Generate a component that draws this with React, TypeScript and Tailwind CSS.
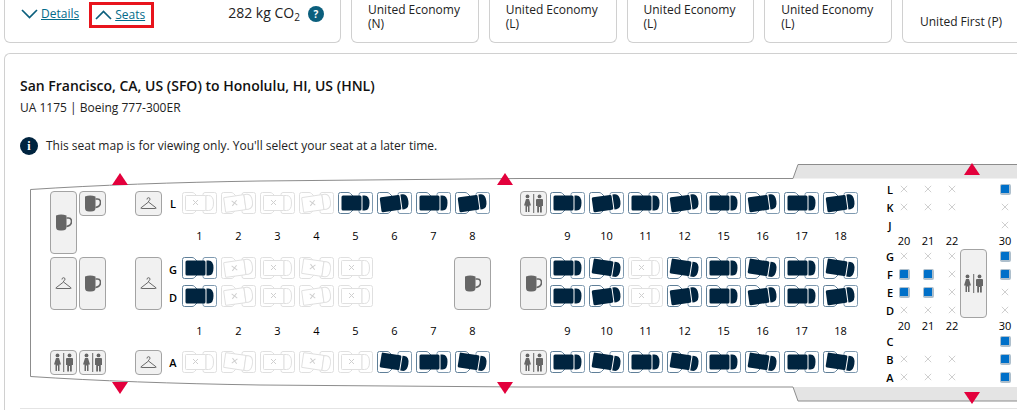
import React from "react";

const NAVY = "#00243f";

function Seat({ on, tilt = 0 }: { on: boolean; tilt?: number }) {
  const line = on ? "#5f7f98" : "#e0e0e0";
  return (
    <svg className="block shrink-0" width="35" height="22" viewBox="0 0 35 22" fill="none">
      <path d="M15 4 L12.5 1.5 Q11.5 .5 10 .5 H2.5 Q.5 .5 .5 2.5 V19.5 Q.5 21.5 2.5 21.5 H10 Q11.5 21.5 12.5 20.5 L15 18" stroke={line} />
      <path d="M21 4 V2.5 Q21 .5 23 .5 H32.5 Q34.5 .5 34.5 2.5 V19.5 Q34.5 21.5 32.5 21.5 H23 Q21 21.5 21 19.5 V18" stroke={on ? "#7f9ab0" : "#e0e0e0"} />
      <g transform={`rotate(${tilt} 17.5 11)`}>
        {on ? (
          <>
            <rect x="3.5" y="3.5" width="20" height="15" rx="1.5" fill={NAVY} />
            <path d="M24.5 3.5 H26.5 Q31.5 3.5 31.5 11 Q31.5 18.5 26.5 18.5 H24.5 Z" fill={NAVY} />
          </>
        ) : (
          <>
            <rect x="3.5" y="3.5" width="20.5" height="15" rx="1" fill="#fff" stroke="#e0e0e0" />
            <path d="M24 3.5 H26.5 Q31.5 3.5 31.5 11 Q31.5 18.5 26.5 18.5 H24 Z" fill="#fff" stroke="#e0e0e0" />
            <path d="M11 8 L16 13 M16 8 L11 13" stroke="#cfcfcf" />
          </>
        )}
      </g>
    </svg>
  );
}

const Cup = () => (
  <svg width="16" height="17" viewBox="0 0 16 17" fill="#666">
    <path d="M0 1.5 Q5 -.5 10.5 1.5 V13 Q10.5 16.5 6 16.5 H4 Q0 16.5 0 13 Z" />
    <path d="M10.5 4 H12.5 Q15.5 4 15.5 7.5 Q15.5 11.5 10.5 12.5" fill="none" stroke="#666" strokeWidth="1.6" />
  </svg>
);

const Hanger = () => (
  <svg width="17" height="13" viewBox="0 0 17 13" fill="none" stroke="#6a6a6a">
    <path d="M7 2.5 Q7 .7 8.5 .7 Q10 .7 10 2.2 Q10 3.4 8.5 4 V5" />
    <path d="M8.5 5 L16 10.8 Q16.5 11.5 15.5 11.5 H1.5 Q.5 11.5 1 10.8 Z" />
  </svg>
);

const Lav = () => (
  <svg width="21" height="19" viewBox="0 0 21 19" fill="#666">
    <circle cx="4.5" cy="2.4" r="1.9" />
    <path d="M3 5 H6 L8 11.5 H6.5 V18 H5 V12.5 H4 V18 H2.5 V11.5 H1 Z" />
    <rect x="10.2" y="0" width="1" height="19" />
    <circle cx="16.5" cy="2.4" r="1.9" />
    <path d="M14 5 H19 Q20 5 20 6 V12 H18.8 V18.5 H17 V13 H16 V18.5 H14.2 V12 H13 V6 Q13 5 14 5 Z" />
  </svg>
);

const facBox = "flex shrink-0 items-center justify-center rounded-[4px] border border-[#a3a3a3] bg-[#f1f1f1]";
const Small = ({ children }: { children: React.ReactNode }) => <div className={`${facBox} h-[25px] w-[27px]`}>{children}</div>;
const Wide = ({ children }: { children: React.ReactNode }) => <div className={`${facBox} h-[53px] w-[27px]`}>{children}</div>;

/* A column of lavatory, galley and closet cards; row gaps follow the cabin's seat rows. */
function FacColumn({ top, mid, bottom }: { top: React.ReactNode; mid: React.ReactNode; bottom: React.ReactNode }) {
  return (
    <div className="flex w-[27px] shrink-0 flex-col">
      <Small>{top}</Small>
      <div className="mt-[41px]">
        <Wide>{mid}</Wide>
      </div>
      <div className="mt-[40px]">
        <Small>{bottom}</Small>
      </div>
    </div>
  );
}

function Tri({ cls, up }: { cls: string; up: boolean }) {
  return (
    <svg className={`absolute ${cls}`} width="16" height="12" viewBox="0 0 16 12" fill="#e3003c">
      <path d={up ? "M8 0 L16 12 H0 Z" : "M0 0 H16 L8 12 Z"} />
    </svg>
  );
}

const T = true;
const F = false;
type State = boolean | null;
const cols1 = ["1", "2", "3", "4", "5", "6", "7", "8"];
const cols2 = ["9", "10", "11", "12", "15", "16", "17", "18"];
/* [L, G, D, A] state and tilt for every column */
const seats1: { on: State[]; tilt: number[] }[] = [
  { on: [F, T, T, F], tilt: [0, 0, 0, 0] },
  { on: [F, F, F, F], tilt: [-8, -8, -8, 8] },
  { on: [F, F, F, F], tilt: [0, 0, 0, 0] },
  { on: [F, F, F, F], tilt: [-8, 8, -8, 8] },
  { on: [T, F, F, F], tilt: [0, 0, 0, 0] },
  { on: [T, null, null, T], tilt: [-8, 0, 0, 9] },
  { on: [T, null, null, T], tilt: [0, 0, 0, 0] },
  { on: [T, null, null, T], tilt: [-8, 0, 0, 9] },
];
const seats2: { on: State[]; tilt: number[] }[] = [
  { on: [T, T, T, T], tilt: [0, 0, 0, 0] },
  { on: [T, T, T, T], tilt: [-8, 9, -8, 9] },
  { on: [T, F, F, T], tilt: [0, 0, 0, 0] },
  { on: [T, T, T, T], tilt: [-8, 9, -8, 9] },
  { on: [T, T, T, T], tilt: [0, 0, 0, 0] },
  { on: [T, T, T, T], tilt: [-8, 9, -8, 9] },
  { on: [T, T, T, T], tilt: [0, 0, 0, 0] },
  { on: [T, T, T, T], tilt: [-8, 9, -8, 9] },
];

const Cell = ({ s, tilt }: { s: State; tilt: number }) => (s === null ? <div className="h-[22px] w-[35px]" /> : <Seat on={s} tilt={tilt} />);

function SeatColumn({ n, s, galley }: { n: string; s: { on: State[]; tilt: number[] }; galley?: boolean }) {
  return (
    <div className="flex w-[35px] shrink-0 flex-col items-center">
      <Cell s={s.on[0]} tilt={s.tilt[0]} />
      <div className="flex h-[43px] items-center text-[11px] leading-none text-black">{n}</div>
      {galley ? (
        <div className={`${facBox} h-[53px] w-[37px]`}>
          <Cup />
        </div>
      ) : (
        <div className="flex h-[53px] flex-col gap-[6px]">
          <Cell s={s.on[1]} tilt={s.tilt[1]} />
          <Cell s={s.on[2]} tilt={s.tilt[2]} />
        </div>
      )}
      <div className="flex h-[41px] items-center text-[11px] leading-none text-black">{n}</div>
      <Cell s={s.on[3]} tilt={s.tilt[3]} />
    </div>
  );
}

const RowLetter = ({ t, cls }: { t: string; cls: string }) => <span className={`text-[11px] font-semibold leading-none text-black ${cls}`}>{t}</span>;

function SmallX() {
  return (
    <svg width="8" height="8" viewBox="0 0 8 8" stroke="#cfcfcf">
      <path d="M.8 .8 L7.2 7.2 M7.2 .8 L.8 7.2" />
    </svg>
  );
}

const Blue = () => <div className="h-[11px] w-[11px] rounded-[2px] border border-r-2 border-b-2 border-[#aebfcc] bg-[#0070c9]" />;

type C = "x" | "b" | "";
const bizRow = (t: string, cells: C[]) => (
  <div key={t} className="flex h-[18px] items-center">
    <span className="w-[16px] text-center text-[11px] font-semibold leading-none text-black">{t}</span>
    <div className="flex gap-[12px]">
      {cells.slice(0, 3).map((c, i) => (
        <div key={i} className="flex h-[12px] w-[12px] items-center justify-center">
          {c === "x" ? <SmallX /> : c === "b" ? <Blue /> : null}
        </div>
      ))}
    </div>
    <div className="ml-[41px] flex h-[12px] w-[12px] items-center justify-center">{cells[3] === "x" ? <SmallX /> : <Blue />}</div>
  </div>
);

const bizNums = (
  <div className="flex h-[13px] items-center pl-[16px] text-[11px] leading-none text-black">
    <div className="flex gap-[12px]">
      {["20", "21", "22"].map((n) => (
        <span key={n} className="flex w-[12px] justify-center">
          {n}
        </span>
      ))}
    </div>
    <span className="ml-[41px] flex w-[12px] justify-center">30</span>
  </div>
);

function Tab({ a, b }: { a: string; b?: string }) {
  return (
    <div className="flex h-[53px] w-[127.75px] shrink-0 flex-col rounded-b-[6px] border border-t-0 border-[#d0d0d0] px-[16px] pt-[13px] text-[12px] leading-[14px] text-[#222]">
      <span>{a}</span>
      <span>{b}</span>
    </div>
  );
}

export default function App() {
  return (
    <div className="h-[410px] w-[1017px] overflow-hidden bg-white text-[#111]" style={{ fontFamily: '"Open Sans", sans-serif' }}>
      <div className="-mt-[10px] flex w-[1200px] gap-[10px] pl-[4px]">
        <div className="flex h-[53px] w-[337px] shrink-0 items-start rounded-b-[6px] border border-t-0 border-[#d0d0d0] pl-[16px] pt-[12px]">
          <div className="mt-[3px] flex items-center gap-[3px] text-[12px] leading-[18px] text-[#036b8a] underline">
            <svg width="17" height="10" viewBox="0 0 17 10" fill="none" stroke="#0b5f7d" strokeWidth="1.7">
              <path d="M1 1 L8.5 8.5 L16 1" />
            </svg>
            <span>Details</span>
          </div>
          <div className="ml-[10px] flex h-[26px] w-[65px] items-center gap-[3px] border-[3px] border-[#e8141c] pl-[3px] text-[12px] text-[#036b8a] underline">
            <svg width="17" height="10" viewBox="0 0 17 10" fill="none" stroke="#0b5f7d" strokeWidth="1.7">
              <path d="M1 9 L8.5 1.5 L16 9" />
            </svg>
            <span>Seats</span>
          </div>
          <div className="ml-[74px] mt-[1px] text-[14px] leading-[20px] text-[#222]">
            282 kg CO<sub className="text-[10px]">2</sub>
          </div>
          <div className="ml-[8px] mt-[4px] flex h-[16px] w-[16px] items-center justify-center rounded-full bg-[#0b5f7d] text-[10px] font-bold leading-none text-white">
            ?
          </div>
        </div>
        <Tab a="United Economy" b="(N)" />
        <Tab a="United Economy" b="(L)" />
        <Tab a="United Economy" b="(L)" />
        <Tab a="United Economy" b="(L)" />
        <div className="h-[53px] w-[128px] shrink-0 rounded-b-[6px] border border-t-0 border-[#d0d0d0] pl-[17px] pt-[25px] text-[12px] leading-[14px] text-[#222]">
          United First (P)
        </div>
      </div>

      <div className="ml-[4px] mt-[10px] h-[400px] w-[1100px] rounded-tl-[6px] border-l border-t border-[#d0d0d0] pl-[15px] pt-[22px]">
        <h2 className="text-[14px] font-semibold leading-[20px] text-[#111]">San Francisco, CA, US (SFO) to Honolulu, HI, US (HNL)</h2>
        <p className="mt-[3px] text-[12px] leading-[18px] text-[#222]">UA 1175 | Boeing 777-300ER</p>
        <div className="mt-[20px] flex h-[18px] items-center gap-[8px] text-[12px] text-[#222]">
          <div className="flex h-[18px] w-[18px] items-center justify-center rounded-full bg-[#00243f] text-[12px] font-bold leading-none text-white" style={{ fontFamily: '"Liberation Serif", serif' }}>
            i
          </div>
          <span>This seat map is for viewing only. You'll select your seat at a later time.</span>
        </div>

        <div className="relative mt-[8px] h-[246px] w-[1000px] border-b border-[#e4e4e4]">
          <svg className="absolute -left-[20px] -top-[163px]" width="1017" height="410" viewBox="0 0 1017 410" fill="none">
            <path d="M793 178.5 L798 164.5 H1017 V178.5 Z" fill="#e4e4e4" />
            <path d="M793 387 L798 401 H1017 V387 Z" fill="#e4e4e4" />
            <path d="M30.5 376.5 V189.5 Q130 183 260 181 L520 178.5 H793 L798 164.5 H1017" stroke="#8c8c8c" />
            <path d="M30.5 376.5 Q130 383 260 385 L520 387 H793 L798 401 H1017" stroke="#8c8c8c" />
          </svg>

          <Tri cls="left-[92px] top-[10px]" up />
          <Tri cls="left-[477px] top-[10px]" up />
          <Tri cls="left-[944px] top-0" up />
          <Tri cls="left-[92px] top-[219px]" up={false} />
          <Tri cls="left-[477px] top-[219px]" up={false} />
          <Tri cls="left-[944px] top-[229px]" up={false} />

          <div className="relative flex items-start pl-[30px] pt-[28px]">
            {/* forward galley: tall cup + closet, cup column */}
            <div className="flex w-[27px] shrink-0 flex-col gap-[3px]">
              <div className={`${facBox} h-[63px] w-[27px]`}>
                <Cup />
              </div>
              <Wide>
                <Hanger />
              </Wide>
              <div className="mt-[37px]">
                <Small>
                  <Lav />
                </Small>
              </div>
            </div>
            <div className="ml-[2px]">
              <FacColumn top={<Cup />} mid={<Cup />} bottom={<Lav />} />
            </div>
            <div className="ml-[29px]">
              <FacColumn top={<Hanger />} mid={<Hanger />} bottom={<Hanger />} />
            </div>

            <div className="ml-[4px] flex h-[182px] w-[14px] shrink-0 flex-col items-center pt-[7px]">
              <RowLetter t="L" cls="" />
              <RowLetter t="G" cls="mt-[55px]" />
              <RowLetter t="D" cls="mt-[17px]" />
              <RowLetter t="A" cls="mt-[54px]" />
            </div>

            <div className="ml-[2px] flex gap-[4px] pt-[1px]">
              {cols1.map((n, i) => (
                <SeatColumn key={n} n={n} s={seats1[i]} galley={n === "8"} />
              ))}
            </div>

            <div className="ml-[30px]">
              <FacColumn top={<Lav />} mid={<Cup />} bottom={<Lav />} />
            </div>

            <div className="ml-[3px] flex gap-[4px] pt-[1px]">
              {cols2.map((n, i) => (
                <SeatColumn key={n} n={n} s={seats2[i]} />
              ))}
            </div>

            {/* forward cabin */}
            <div className="relative -mt-[11px] ml-[24px] flex shrink-0 flex-col">
              {bizRow("L", ["x", "x", "x", "b"])}
              {bizRow("K", ["x", "x", "x", "x"])}
              {bizRow("J", ["", "", "", "x"])}
              {bizNums}
              {bizRow("G", ["x", "x", "x", "b"])}
              {bizRow("F", ["b", "b", "x", "b"])}
              {bizRow("E", ["b", "b", "x", "x"])}
              {bizRow("D", ["x", "x", "x", "x"])}
              {bizNums}
              {bizRow("C", ["", "", "", "b"])}
              {bizRow("B", ["x", "x", "x", "b"])}
              {bizRow("A", ["x", "x", "x", "b"])}
              <div className={`${facBox} absolute left-[78px] top-[69px] h-[69px] w-[27px]`}>
                <Lav />
              </div>
            </div>
          </div>
        </div>
      </div>
    </div>
  );
}
